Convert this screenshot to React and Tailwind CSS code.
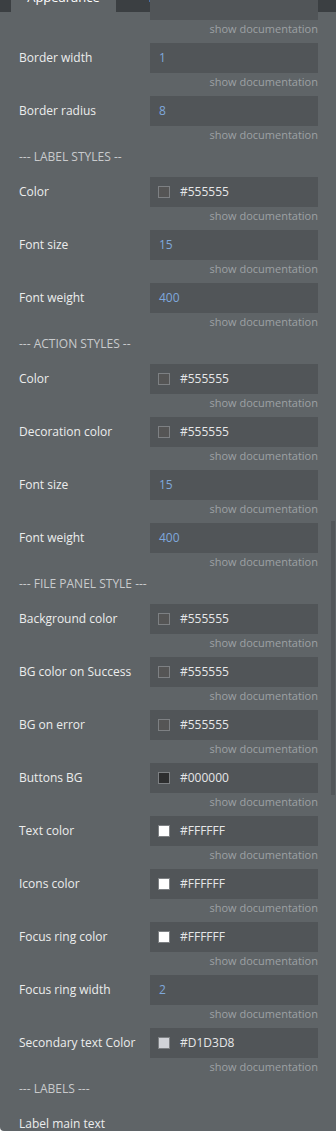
import React from 'react'

const rows = [
  { type: 'input', label: 'Border width', value: '1' },
  { type: 'input', label: 'Border radius', value: '8' },
  { type: 'header', label: '--- LABEL STYLES --' },
  { type: 'color', label: 'Color', value: '#555555', swatch: 'bg-[#555555]' },
  { type: 'input', label: 'Font size', value: '15' },
  { type: 'input', label: 'Font weight', value: '400' },
  { type: 'header', label: '--- ACTION STYLES --' },
  { type: 'color', label: 'Color', value: '#555555', swatch: 'bg-[#555555]' },
  { type: 'color', label: 'Decoration color', value: '#555555', swatch: 'bg-[#555555]' },
  { type: 'input', label: 'Font size', value: '15' },
  { type: 'input', label: 'Font weight', value: '400' },
  { type: 'header', label: '--- FILE PANEL STYLE ---' },
  { type: 'color', label: 'Background color', value: '#555555', swatch: 'bg-[#555555]' },
  { type: 'color', label: 'BG color on Success', value: '#555555', swatch: 'bg-[#555555]' },
  { type: 'color', label: 'BG on error', value: '#555555', swatch: 'bg-[#555555]' },
  { type: 'color', label: 'Buttons BG', value: '#000000', swatch: 'bg-[#2d2e2f]' },
  { type: 'color', label: 'Text color', value: '#FFFFFF', swatch: 'bg-white' },
  { type: 'color', label: 'Icons color', value: '#FFFFFF', swatch: 'bg-white' },
  { type: 'color', label: 'Focus ring color', value: '#FFFFFF', swatch: 'bg-white' },
  { type: 'input', label: 'Focus ring width', value: '2' },
  { type: 'color', label: 'Secondary text Color', value: '#D1D3D8', swatch: 'bg-[#d1d3d8]' },
  { type: 'header', label: '--- LABELS ---' },
]

function DocLink() {
  return (
    <div className="h-[23px] pt-[2px] pr-[18px] text-right text-[11px] leading-[14px] text-[#9da1a4]">
      show documentation
    </div>
  )
}

function Row({ row }) {
  if (row.type === 'header') {
    return (
      <div className="h-[28px] pl-[19px] text-[12px] leading-[16px] text-[#c9cbcd]">
        {row.label}
      </div>
    )
  }

  return (
    <div>
      <div className="flex h-[30px] items-center">
        <div className="w-[150px] shrink-0 pl-[19px] text-[12px] text-[#eceded]">{row.label}</div>
        <div className="flex h-full w-[168px] items-center bg-[#515558] pl-[8px] text-[12px]">
          {row.type === 'color' ? (
            <>
              <span className={`h-[12px] w-[12px] border border-[#7d8083] ${row.swatch}`} />
              <span className="ml-[10px] text-[#e6e7e8]">{row.value}</span>
            </>
          ) : (
            <span className="pl-px text-[#7fa8dc]">{row.value}</span>
          )}
        </div>
      </div>
      <DocLink />
    </div>
  )
}

export default function App() {
  return (
    <div
      className="relative h-[1131px] w-[336px] overflow-hidden rounded-bl-[4px] bg-[#5f6467]"
      style={{ fontFamily: '"Open Sans", sans-serif' }}
    >
      <div className="mt-[-28px] flex h-[40px] bg-[#3b3f42] text-[13px] leading-[16px] text-white">
        <div className="ml-[11px] flex w-[105px] items-end justify-center bg-[#5f6467] pb-[7px]">
          Appearance
        </div>
        <div className="flex w-[106px] items-end justify-center pb-[7px] text-[#d6d8d9]">Layout</div>
        <div className="flex w-[104px] items-end justify-center pb-[7px] text-[#d6d8d9]">Conditional</div>
      </div>

      <div className="mt-[-22px]">
        <div className="flex h-[30px] items-center">
          <div className="w-[150px] shrink-0" />
          <div className="h-full w-[168px] bg-[#515558]" />
        </div>
        <DocLink />
      </div>

      {rows.map((row, i) => (
        <Row key={i} row={row} />
      ))}

      <div className="flex h-[30px] items-center pl-[19px] text-[12px] text-[#eceded]">Label main text</div>

      <div className="absolute right-px top-[521px] h-[274px] w-[4px] bg-[#53575a]" />
    </div>
  )
}
